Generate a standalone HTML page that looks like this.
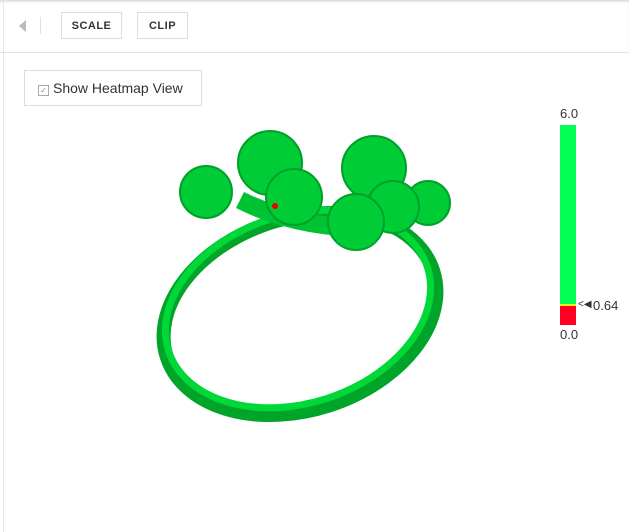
<html><body style="margin:0;width:629px;height:532px;background:#fff;font-family:'Liberation Sans',sans-serif;position:relative;overflow:hidden">
<div style="position:absolute;left:0;top:0;width:629px;height:52px;border-bottom:1px solid #e3e3e3;box-shadow:inset 0 3px 3px -2px #ccc"></div>
<div style="position:absolute;left:3px;top:0;width:1px;height:532px;background:#e5e5e5"></div>
<div style="position:absolute;left:19px;top:20px;width:0;height:0;border-top:6px solid transparent;border-bottom:6px solid transparent;border-right:7px solid #bbb"></div>
<div style="position:absolute;left:40px;top:17px;width:1px;height:17px;background:#e0e0e0"></div>
<div style="position:absolute;left:61px;top:12px;width:61px;height:27px;border:1px solid #ddd;box-sizing:border-box;font-size:11px;font-weight:bold;color:#333;text-align:center;line-height:26px;letter-spacing:.5px">SCALE</div>
<div style="position:absolute;left:137px;top:12px;width:51px;height:27px;border:1px solid #ddd;box-sizing:border-box;font-size:11px;font-weight:bold;color:#333;text-align:center;line-height:26px;letter-spacing:.5px">CLIP</div>
<div style="position:absolute;left:24px;top:70px;width:178px;height:36px;border:1px solid #ddd;box-sizing:border-box;font-size:14px;color:#333;line-height:34px;padding-left:13px"><span style="display:inline-block;width:9px;height:9px;border:1px solid #aaa;font-size:8px;line-height:9px;text-align:center;color:#888;vertical-align:0;margin-right:4px">✓</span>Show Heatmap View</div>
<div style="position:absolute;left:560px;top:106px;font-size:13px;color:#333">6.0</div>
<div style="position:absolute;left:560px;top:125px;width:16px;height:179px;background:#00ff50"></div>
<div style="position:absolute;left:560px;top:304px;width:16px;height:2px;background:#f0f020"></div>
<div style="position:absolute;left:560px;top:306px;width:16px;height:19px;background:#ff0022"></div>
<div style="position:absolute;left:560px;top:327px;font-size:13px;color:#333">0.0</div>
<div style="position:absolute;left:578px;top:299px;font-size:10px;color:#333">&lt;◀</div>
<div style="position:absolute;left:593px;top:298px;font-size:13px;color:#333">0.64</div>
<svg width="629" height="532" style="position:absolute;left:0;top:0">
<ellipse cx="300" cy="314" rx="140" ry="96" fill="none" stroke="#00a428" stroke-width="14" transform="rotate(-18 300 314)"/>
<ellipse cx="298" cy="309" rx="136" ry="94" fill="none" stroke="#00d838" stroke-width="7" transform="rotate(-18 298 309)"/>
<path d="M240 200 Q300 230 380 228" stroke="#00c232" stroke-width="18" fill="none"/>
<g fill="#00cc36" stroke="#00a02a" stroke-width="2">
<circle cx="206" cy="192" r="26"/>
<circle cx="270" cy="163" r="32"/>
<circle cx="374" cy="168" r="32"/>
<circle cx="428" cy="203" r="22"/>
<circle cx="393" cy="207" r="26"/>
<circle cx="294" cy="197" r="28"/>
<circle cx="356" cy="222" r="28"/>
</g>
<circle cx="275" cy="206" r="3" fill="#e00"/>
</svg>
</body></html>
